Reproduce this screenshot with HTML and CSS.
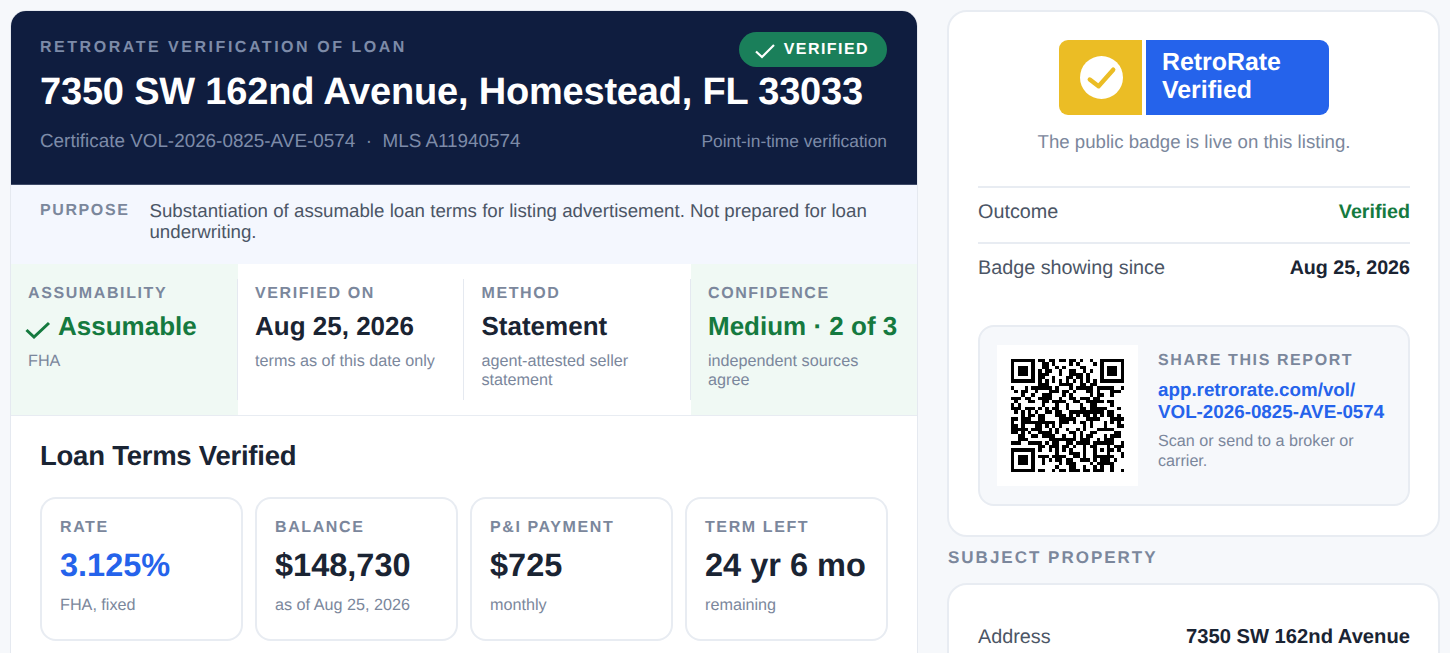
FILE: index.html
```html
<!DOCTYPE html>
<html lang="en">
<head>
<meta charset="utf-8">
<title>RetroRate Verification of Loan</title>
<link rel="stylesheet" href="styles.css">
</head>
<body>
<div class="layout">
  <main class="report">
    <header class="hero">
      <div class="hero-top">
        <div class="eyebrow">RETRORATE VERIFICATION OF LOAN</div>
        <div class="pill"><svg class="pill-check" viewBox="0 0 20 16"><path d="M1 8.500 L7 14 L19 2"/></svg>VERIFIED</div>
      </div>
      <h1>7350 SW 162nd Avenue, Homestead, FL 33033</h1>
      <div class="hero-meta"><span class="cert">Certificate VOL-2026-0825-AVE-0574 &nbsp;·&nbsp; MLS A11940574</span><span class="pit">Point-in-time verification</span></div>
    </header>
    <div class="purpose"><span class="purpose-label">PURPOSE</span><span class="purpose-text">Substantiation of assumable loan terms for listing advertisement. Not prepared for loan underwriting.</span></div>
    <div class="stats">
      <div class="stat good">
        <div class="label">ASSUMABILITY</div>
        <div class="stat-val green"><svg class="val-check" viewBox="0 0 26 18"><path d="M1.500 9 L9 16 L24 2"/></svg>Assumable</div>
        <div class="note">FHA</div>
      </div>
      <div class="stat">
        <div class="label">VERIFIED ON</div>
        <div class="stat-val">Aug 25, 2026</div>
        <div class="note">terms as of this date only</div>
      </div>
      <div class="stat">
        <div class="label">METHOD</div>
        <div class="stat-val">Statement</div>
        <div class="note">agent-attested seller statement</div>
      </div>
      <div class="stat good">
        <div class="label">CONFIDENCE</div>
        <div class="stat-val green">Medium · 2 of 3</div>
        <div class="note">independent sources agree</div>
      </div>
    </div>
    <section class="terms">
      <h2>Loan Terms Verified</h2>
      <div class="term-grid">
        <div class="term"><div class="label">RATE</div><div class="term-val blue">3.125%</div><div class="note">FHA, fixed</div></div>
        <div class="term"><div class="label">BALANCE</div><div class="term-val">$148,730</div><div class="note">as of Aug 25, 2026</div></div>
        <div class="term"><div class="label">P&amp;I PAYMENT</div><div class="term-val">$725</div><div class="note">monthly</div></div>
        <div class="term"><div class="label">TERM LEFT</div><div class="term-val">24 yr 6 mo</div><div class="note">remaining</div></div>
      </div>
    </section>
  </main>
  <aside class="side">
    <div class="card">
      <div class="badge-wrap">
        <div class="badge">
          <div class="badge-mark"><svg class="badge-icon" viewBox="0 0 44 44"><circle cx="22" cy="22" r="22" fill="#fff"/><path d="M10 24 L19 31 L34 14" fill="none" stroke="#ebbd25" stroke-width="4.500" stroke-linecap="round" stroke-linejoin="round"/></svg></div>
          <div class="badge-text">RetroRate<br>Verified</div>
        </div>
        <p class="badge-note">The public badge is live on this listing.</p>
      </div>
      <div class="row"><span>Outcome</span><b class="green">Verified</b></div>
      <div class="row"><span>Badge showing since</span><b>Aug 25, 2026</b></div>
      <div class="share">
        <svg id="qr" class="qr" viewBox="-4 -4 41 41" shape-rendering="crispEdges" data-text="https://app.retrorate.com/vol/VOL-2026-0825-AVE-0574"></svg>
        <div class="share-text">
          <div class="label">SHARE THIS REPORT</div>
          <a class="share-link">app.retrorate.com/vol/<br>VOL-2026-0825-AVE-0574</a>
          <div class="note">Scan or send to a broker or carrier.</div>
        </div>
      </div>
    </div>
    <div class="section-title">SUBJECT PROPERTY</div>
    <div class="card card-prop">
      <div class="row bare"><span>Address</span><b>7350 SW 162nd Avenue</b></div>
    </div>
  </aside>
</div>
<script src="qr.js"></script>
</body>
</html>
```
FILE: styles.css
```css
* { box-sizing: border-box; }
html, body { height: 653px; overflow: hidden; }
body { margin: 0; background: #f6f8fb; font-family: "Liberation Sans", Arial, sans-serif; color: #1a2433; text-rendering: geometricPrecision; }
.layout { display: grid; grid-template-columns: 908px 493px; column-gap: 29px; padding: 10px 0 0 10px; align-items: start; }
.report { background: #fff; border: 1px solid #e5e9f0; border-radius: 16px; overflow: hidden; }
.hero { background: #0f1d3f; padding: 28px 30px 0 29px; height: 174px; color: #fff; border-bottom: 1px solid #3e4a68; }
.hero-top { display: flex; justify-content: space-between; align-items: flex-start; height: 31px; }
.eyebrow { font-size: 16px; font-weight: 700; letter-spacing: 2.530px; color: #7d8ba8; line-height: 18px; }
.pill { display: flex; align-items: center; margin-top: -7px; height: 35px; padding: 0 18px 0 16px; border-radius: 18px; background: #1a7f5a; font-size: 16px; font-weight: 700; letter-spacing: 1.440px; }
.pill-check { width: 20px; height: 16px; margin-right: 9px; margin-top: 3px; fill: none; stroke: #fff; stroke-width: 2.200; }
h1 { margin: 0; font-size: 38px; line-height: 44px; font-weight: 700; white-space: nowrap; letter-spacing: -0.190px; }
.hero-meta { display: flex; justify-content: space-between; align-items: center; line-height: 22px; color: #7d8ba8; margin-top: 16px; }
.cert { font-size: 18.870px; }
.pit { font-size: 17.400px; }
.purpose { display: flex; gap: 20px; background: #f4f7fe; padding: 15px 29px 0; height: 79px; font-size: 18.720px; line-height: 21px; color: #4b5565; }
.purpose-label { font-size: 16px; font-weight: 700; letter-spacing: 1.600px; color: #7b879c; flex: none; line-height: 20px; margin-top: 1px; }
.stats { display: grid; grid-template-columns: repeat(4, 1fr); border-bottom: 1px solid #e8ecf2; height: 152px; }
.stat { padding: 20px 17.500px 0; position: relative; }
.stat:first-child { padding-left: 17px; }
.stat:not(:last-child)::after { content: ""; position: absolute; right: 0; top: 15px; height: 121px; width: 1px; background: #e5e9f0; }
.good { background: #f0f9f4; }
.label { font-size: 16px; font-weight: 700; letter-spacing: 1.600px; color: #7b879c; line-height: 20px; }
.stat-val { font-size: 26px; font-weight: 700; line-height: 32px; margin-top: 6px; white-space: nowrap; }
.green { color: #157a3f; }
.blue { color: #2563eb; }
.val-check { width: 26px; height: 18px; margin: 0 7px -4px -3px; fill: none; stroke: #157a3f; stroke-width: 3; }
.note { font-size: 16.200px; line-height: 19px; color: #7b879c; margin-top: 10px; }
.terms { padding: 0 29px 30px; }
h2 { margin: 22px 0 23px; font-size: 27.500px; line-height: 36px; font-weight: 700; letter-spacing: -0.240px; }
.term-grid { display: grid; grid-template-columns: repeat(4, 1fr); gap: 12px; }
.term { border: 2px solid #e8ecf2; border-radius: 16px; padding: 19px 18px; height: 144px; }
.term-val { font-size: 32.500px; line-height: 40px; font-weight: 700; margin-top: 7px; white-space: nowrap; }
.term .note { margin-top: 11px; }
.card { background: #fff; border: 2px solid #e8ecf2; border-radius: 20px; padding: 28px 28px 29px 29px; }
.badge-wrap { display: flex; flex-direction: column; align-items: center; }
.badge { display: flex; height: 75px; width: 270px; border-radius: 9px; overflow: hidden; gap: 4px; }
.badge-mark { width: 83px; background: #ebbd25; display: flex; align-items: center; justify-content: center; }
.badge-icon { width: 43px; height: 43px; margin-left: 1px; }
.badge-text { flex: 1; background: #2563eb; color: #fff; font-size: 24.900px; font-weight: 700; line-height: 28px; padding: 8px 16px; }
.badge-note { margin: 15px 0 32px; font-size: 18.650px; line-height: 24px; color: #7b879c; }
.row { display: flex; justify-content: space-between; align-items: flex-start; border-top: 2px solid #e8ecf2; height: 56px; padding-top: 12px; font-size: 19.800px; line-height: 24px; color: #4b5565; }
.row b { color: #1a2433; font-size: 19.700px; }
.row b.green { color: #157a3f; }
.share { display: flex; gap: 20px; background: #f6f8fb; border: 2px solid #e8ecf2; border-radius: 16px; padding: 18px 18px 18px 17px; margin-top: 27px; height: 181px; }
.qr { width: 141px; height: 141px; background: #fff; flex: none; display: block; }
.share-text { padding-top: 6px; }
.share-link { display: block; color: #2563eb; font-size: 18.800px; font-weight: 700; line-height: 22px; margin-top: 8px; white-space: nowrap; }
.share .note { margin-top: 7.500px; font-size: 16.150px; line-height: 20px; }
.section-title { font-size: 17px; line-height: 20px; font-weight: 700; letter-spacing: 2px; color: #7b879c; margin: 11px 0 15px 1px; }
.card-prop { padding-top: 28px; }
.bare { border-top: 0; height: 44px; }
.row.bare b { font-size: 20.200px; }
```
FILE: qr.js
```js
// Minimal QR encoder: byte mode, version 4, error correction level M, mask 4.
(function () {
  var svg = document.getElementById("qr");
  var text = svg.getAttribute("data-text");
  var size = 33, exp = [], log = [], i, j, x, y;
  for (i = 0, x = 1; i < 255; i++) {
    exp[i] = x; log[x] = i;
    x = (x << 1) ^ (x & 128 ? 0x11d : 0);
  }
  function mul(a, b) { return a && b ? exp[(log[a] + log[b]) % 255] : 0; }

  var bits = [];
  function put(v, n) { for (var k = n - 1; k >= 0; k--) bits.push((v >> k) & 1); }
  put(4, 4); put(text.length, 8);
  for (i = 0; i < text.length; i++) put(text.charCodeAt(i), 8);
  put(0, Math.min(4, 512 - bits.length));
  while (bits.length % 8) bits.push(0);
  var data = [];
  for (i = 0; i < bits.length; i += 8) data.push(parseInt(bits.slice(i, i + 8).join(""), 2));
  for (i = 0; data.length < 64; i++) data.push(i % 2 ? 0x11 : 0xec);

  var gen = [1];
  for (i = 0; i < 18; i++) {
    var next = [];
    for (j = 0; j <= gen.length; j++) {
      next[j] = (j < gen.length ? mul(gen[j], exp[i]) : 0) ^ (j > 0 ? gen[j - 1] : 0);
    }
    gen = next;
  }
  gen.reverse();
  function ecOf(block) {
    var r = block.concat(new Array(18).fill(0));
    for (var a = 0; a < block.length; a++) {
      var c = r[a];
      if (c) for (var b = 0; b < gen.length; b++) r[a + b] ^= mul(gen[b], c);
    }
    return r.slice(block.length);
  }
  var b1 = data.slice(0, 32), b2 = data.slice(32), e1 = ecOf(b1), e2 = ecOf(b2), words = [];
  for (i = 0; i < 32; i++) words.push(b1[i], b2[i]);
  for (i = 0; i < 18; i++) words.push(e1[i], e2[i]);

  var m = [], func = [];
  for (y = 0; y < size; y++) { m.push(new Array(size).fill(0)); func.push(new Array(size).fill(false)); }
  function setF(px, py, v) { m[py][px] = v ? 1 : 0; func[py][px] = true; }
  function finder(cx, cy) {
    for (var dy = -4; dy <= 4; dy++) for (var dx = -4; dx <= 4; dx++) {
      var px = cx + dx, py = cy + dy;
      if (px < 0 || py < 0 || px >= size || py >= size) continue;
      var d = Math.max(Math.abs(dx), Math.abs(dy));
      setF(px, py, d !== 2 && d !== 4);
    }
  }
  for (i = 0; i < size; i++) { setF(6, i, i % 2 === 0); setF(i, 6, i % 2 === 0); }
  finder(3, 3); finder(size - 4, 3); finder(3, size - 4);
  for (y = -2; y <= 2; y++) for (x = -2; x <= 2; x++) {
    setF(26 + x, 26 + y, Math.max(Math.abs(x), Math.abs(y)) !== 1);
  }

  var MASK = 4, rem = MASK, k;
  for (k = 0; k < 10; k++) rem = (rem << 1) ^ ((rem >> 9) * 0x537);
  var f = ((MASK << 10) | rem) ^ 0x5412;
  function bit(n) { return (f >> n) & 1; }
  for (k = 0; k <= 5; k++) setF(8, k, bit(k));
  setF(8, 7, bit(6)); setF(8, 8, bit(7)); setF(7, 8, bit(8));
  for (k = 9; k < 15; k++) setF(14 - k, 8, bit(k));
  for (k = 0; k < 8; k++) setF(size - 1 - k, 8, bit(k));
  for (k = 8; k < 15; k++) setF(8, size - 15 + k, bit(k));
  setF(8, size - 8, 1);

  var idx = 0;
  for (var right = size - 1; right >= 1; right -= 2) {
    if (right === 6) right = 5;
    for (var v = 0; v < size; v++) {
      for (j = 0; j < 2; j++) {
        x = right - j;
        y = ((right + 1) & 2) === 0 ? size - 1 - v : v;
        if (!func[y][x]) {
          var b = idx < words.length * 8 ? (words[idx >> 3] >> (7 - (idx & 7))) & 1 : 0;
          idx++;
          if ((Math.floor(y / 2) + Math.floor(x / 3)) % 2 === 0) b ^= 1;
          m[y][x] = b;
        }
      }
    }
  }

  var d = "";
  for (y = 0; y < size; y++) for (x = 0; x < size; x++) {
    if (m[y][x]) d += "M" + x + " " + y + "h1v1h-1z";
  }
  var path = document.createElementNS("http://www.w3.org/2000/svg", "path");
  path.setAttribute("d", d);
  svg.appendChild(path);
})();
```
